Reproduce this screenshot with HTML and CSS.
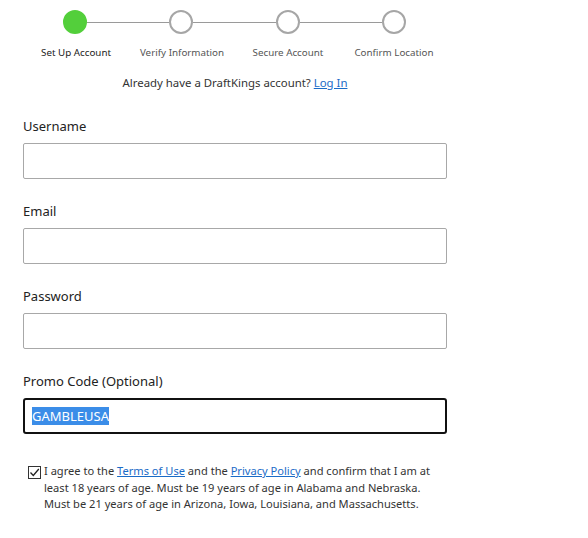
FILE: index.html
```html
<!DOCTYPE html>
<html>
<head>
<meta charset="utf-8">
<link rel="stylesheet" href="styles.css">
</head>
<body>
<div class="page">
  <div class="stepper">
    <div class="track">
      <span class="dot done"></span>
      <span class="line"></span>
      <span class="dot"></span>
      <span class="line"></span>
      <span class="dot"></span>
      <span class="line"></span>
      <span class="dot"></span>
    </div>
    <div class="labels">
      <span class="active">Set Up Account</span>
      <span>Verify Information</span>
      <span>Secure Account</span>
      <span>Confirm Location</span>
    </div>
  </div>
  <p class="login">Already have a DraftKings account? <a href="#">Log In</a></p>
  <form class="form">
    <label class="field">
      <span class="label">Username</span>
      <input class="input" type="text">
    </label>
    <label class="field">
      <span class="label">Email</span>
      <input class="input" type="text">
    </label>
    <label class="field">
      <span class="label">Password</span>
      <input class="input" type="password">
    </label>
    <div class="field">
      <span class="label">Promo Code (Optional)</span>
      <div class="input focused"><span class="sel">GAMBLEUSA</span></div>
    </div>
    <div class="agree">
      <span class="check"><svg width="11" height="11" viewBox="0 0 11 11"><path d="M1.5 5.5 L4.3 8.5 L9.8 2" fill="none" stroke="#222" stroke-width="1.3"/></svg></span>
      <p>I agree to the <a href="#">Terms of Use</a> and the <a href="#">Privacy Policy</a> and confirm that I am at least 18 years of age. Must be 19 years of age in Alabama and Nebraska. Must be 21 years of age in Arizona, Iowa, Louisiana, and Massachusetts.</p>
    </div>
  </form>
</div>
</body>
</html>
```
FILE: styles.css
```css
html, body {
  margin: 0;
  background: #fff;
}
body {
  font-family: "Noto Sans", "Open Sans", sans-serif;
  color: #222;
}
.page {
  width: 424px;
  padding: 10px 0 0 23px;
}
.stepper {
  display: flex;
  flex-direction: column;
}
.track {
  display: flex;
  align-items: center;
  margin: 0 41px 0 40px;
}
.dot {
  width: 20px;
  height: 20px;
  border: 2px solid #a6a6a6;
  border-radius: 50%;
  background: #fff;
  flex: none;
}
.dot.done {
  background: #53cf3b;
  border-color: #53cf3b;
}
.line {
  flex: 1;
  height: 1px;
  background: #9a9a9a;
}
.labels {
  display: grid;
  grid-template-columns: repeat(4, 1fr);
  margin-top: 12px;
  font-size: 9.8px;
  color: #555;
  text-align: center;
}
.labels .active {
  color: #222;
}
.login {
  margin: 16px 0 0;
  text-align: center;
  font-size: 11.4px;
  color: #333;
}
a {
  color: #1a6bc7;
  text-decoration: underline;
}
.form {
  margin-top: 28px;
  display: flex;
  flex-direction: column;
  gap: 24px;
}
.field {
  display: flex;
  flex-direction: column;
  gap: 9px;
}
.label {
  font-size: 13px;
  color: #222;
  line-height: 16px;
}
.input {
  box-sizing: border-box;
  width: 424px;
  height: 36px;
  border: 1px solid #a8a8a8;
  border-radius: 2px;
  margin: 0;
  padding: 0 7px;
  font: inherit;
  background: #fff;
}
.input.focused {
  border: 2px solid #111;
  border-radius: 3px;
  display: flex;
  align-items: center;
  font-size: 13px;
}
.sel {
  background: #3b8de8;
  color: #fff;
  line-height: 18px;
}
.agree {
  display: flex;
  align-items: flex-start;
  gap: 3px;
  margin: 5px 0 0 5px;
}
.check {
  box-sizing: border-box;
  width: 13px;
  height: 13px;
  border: 1px solid #333;
  display: flex;
  align-items: center;
  justify-content: center;
  margin-top: 3px;
  flex: none;
}
.agree p {
  margin: 0;
  font-size: 11.1px;
  line-height: 16.5px;
  color: #333;
  width: 400px;
}
```
